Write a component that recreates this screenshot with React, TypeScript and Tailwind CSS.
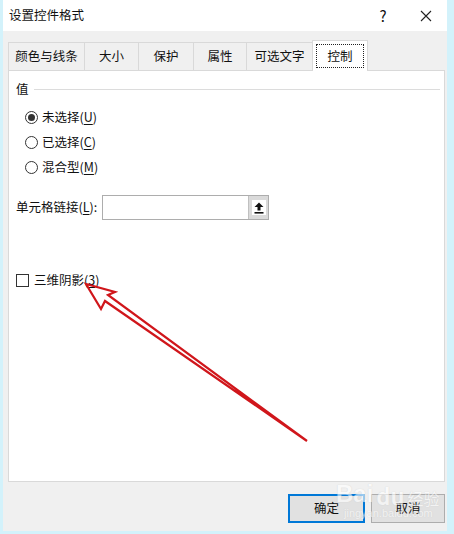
import React from "react";

const font = "font-['Noto_Sans_CJK_SC','Noto_Sans',sans-serif]";

const tabs = [
  { label: "颜色与线条", w: "w-[76px]" },
  { label: "大小", w: "w-[54px]" },
  { label: "保护", w: "w-[55px]" },
  { label: "属性", w: "w-[53px]" },
  { label: "可选文字", w: "w-[66px]" },
];

const radios = [
  { label: "未选择", key: "U", checked: true },
  { label: "已选择", key: "C", checked: false },
  { label: "混合型", key: "M", checked: false },
];

function Radio({ checked }: { checked: boolean }) {
  return (
    <span className="w-[13px] h-[13px] rounded-full border border-[#333] bg-white flex items-center justify-center shrink-0">
      {checked && <span className="w-[7px] h-[7px] rounded-full bg-[#333]" />}
    </span>
  );
}

function Hotkey({ k }: { k: string }) {
  return (
    <span>
      (<span className="underline underline-offset-2">{k}</span>)
    </span>
  );
}

export default function App() {
  return (
    <div className={`relative w-[454px] h-[534px] bg-[#d3f2fb] pl-[3px] pr-[7px] pb-[3px] text-[12px] text-[#111] ${font}`}>
      <div className="w-[444px] h-[531px] flex flex-col bg-[#f0f0f0]">
        {/* title bar */}
        <div className="h-[31px] bg-white flex items-center pl-[6px] shrink-0">
          <span className="text-[12.5px] leading-none">设置控件格式</span>
          <span className="ml-auto w-[20px] text-center text-[15px] leading-none mr-[27px]">?</span>
          <svg width="12" height="12" viewBox="0 0 12 12" className="mr-[15px]">
            <path d="M1 1 L11 11 M11 1 L1 11" stroke="#222" strokeWidth="1.1" />
          </svg>
        </div>

        {/* tabs */}
        <div className="flex items-end pl-[5px] mt-[9px] h-[31px] relative z-10">
          {tabs.map((t) => (
            <div
              key={t.label}
              className={`${t.w} h-[28px] mb-[1px] border border-r-0 border-b-0 border-[#d9d9d9] bg-[#f0f0f0] flex items-center justify-center leading-none text-[12.5px]`}
            >
              {t.label}
            </div>
          ))}
          <div className="w-[56px] h-[31px] border border-b-0 border-[#d9d9d9] bg-white flex items-center justify-center">
            <span className="w-[46px] h-[22px] outline outline-1 outline-dotted outline-[#222] flex items-center justify-center text-[12.5px] leading-none">
              控制
            </span>
          </div>
        </div>

        {/* panel */}
        <div className="mx-[5px] mr-[2px] -mt-[1px] h-[412px] bg-white border border-[#d9d9d9] pt-[10px] pl-[7px] pr-[4px] flex flex-col">
          <div className="h-[16px] flex items-center gap-[5px]">
            <span className="leading-none text-[12.5px]">值</span>
            <span className="flex-1 h-px bg-[#dcdcdc]" />
          </div>

          <div className="mt-[8px] pl-[9px] flex flex-col">
            {radios.map((r) => (
              <div key={r.key} className="h-[25px] flex items-center gap-[4px]">
                <Radio checked={r.checked} />
                <span className="leading-none text-[12.5px]">
                  {r.label}
                  <Hotkey k={r.key} />
                </span>
              </div>
            ))}
          </div>

          <div className="mt-[15px] h-[25px] flex items-center">
            <span className="w-[86px] leading-none text-[12.5px]">
              单元格链接
              <Hotkey k="L" />:
            </span>
            <div className="w-[167px] h-[25px] border border-[#adadad] bg-white flex justify-end">
              <div className="w-[20px] h-full bg-[#dadada] border-l border-[#c0c0c0] flex items-center justify-center">
                <span className="w-[14px] h-[15px] bg-white flex items-center justify-center">
                  <svg width="10" height="12" viewBox="0 0 10 12">
                    <path d="M5 0.5 L9.5 5 L6.5 5 L6.5 8.5 L3.5 8.5 L3.5 5 L0.5 5 Z" fill="#111" />
                    <rect x="0.5" y="10" width="9" height="1.6" fill="#111" />
                  </svg>
                </span>
              </div>
            </div>
          </div>

          <div className="mt-[52px] h-[16px] flex items-center gap-[5px]">
            <span className="w-[13px] h-[13px] border border-[#333] bg-white shrink-0" />
            <span className="leading-none text-[12.5px]">
              三维阴影
              <Hotkey k="3" />
            </span>
          </div>
        </div>

        {/* buttons */}
        <div className="flex mt-[12px] pl-[285px] gap-[6px]">
          <button className="w-[77px] h-[29px] border-2 border-[#0078d7] bg-[#e1e1e1] text-[12.5px] leading-none">
            确定
          </button>
          <button className="w-[74px] h-[29px] border border-[#adadad] bg-[#e1e1e1] text-[12.5px] leading-none">
            取消
          </button>
        </div>
      </div>

      {/* baidu watermark */}
      <div className="absolute left-[336px] top-[482px] flex flex-col items-start pointer-events-none opacity-60">
        <div className="flex items-end gap-[3px] leading-none">
          <span className="text-[24px] font-bold text-white font-['Liberation_Sans',sans-serif] [text-shadow:0_0_1px_#bbb]">Bai</span>
          <span className="text-[22px] font-bold text-white [text-shadow:0_0_1px_#bbb]">du</span>
          <span className="text-[16px] text-white [text-shadow:0_0_1px_#bbb]">经验</span>
        </div>
        <span className="text-[11px] text-white leading-none mt-[2px] ml-[8px] font-['Liberation_Sans',sans-serif] [text-shadow:0_0_1px_#bbb]">
          jingyan.baidu.com
        </span>
      </div>

      {/* red annotation arrow */}
      <svg className="absolute left-0 top-0 pointer-events-none" width="454" height="534" viewBox="0 0 454 534">
        <polygon
          points="86,284 115,292 108,295 307,441 105,301 101,309"
          fill="none"
          stroke="#d0161b"
          strokeWidth="2.2"
          strokeLinejoin="miter"
        />
      </svg>
    </div>
  );
}
